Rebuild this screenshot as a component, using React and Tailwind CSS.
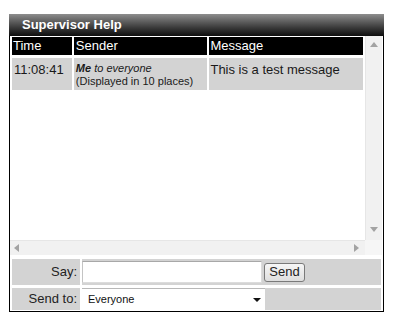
const FONT = { fontFamily: '"Liberation Sans", Arial, sans-serif' };

// ─── fake scrollbar arrows ────────────────────────────────────────────
function Arrow({ dir }) {
  const pts = {
    up: "0,5 4,0 8,5",
    down: "0,0 8,0 4,5",
    left: "5,0 5,8 0,4",
    right: "0,0 0,8 5,4",
  }[dir];
  const vert = dir === "up" || dir === "down";
  return (
    <svg width={vert ? 8 : 5} height={vert ? 5 : 8} viewBox={vert ? "0 0 8 5" : "0 0 5 8"}>
      <polygon points={pts} fill="#a3a3a3" />
    </svg>
  );
}

export default function App() {
  return (
    <div className="bg-white w-[396px] h-[325px] pt-[14px] pl-[9px]" style={FONT}>
      <div className="w-[375px] border-x border-b border-black">
        {/* title bar */}
        <div className="h-[22px] -mx-px bg-linear-to-b from-[#8e8e8e] via-[#4a4a4a] to-[#0e0e0e] pl-[13px] text-[13px] leading-[22px] font-bold text-white">
          Supervisor Help
        </div>

        {/* message list */}
        <div className="flex h-[204px]">
          <div className="w-[355px] px-[2px] pt-[1px] flex flex-col gap-[3px]">
            <div className="flex gap-[2px] h-[18px] text-[13px] leading-[18px] text-white">
              <div className="w-[60px] bg-black pl-[1px]">Time</div>
              <div className="w-[134px] bg-black pl-[2px]">Sender</div>
              <div className="w-[154px] bg-black pl-[1px]">Message</div>
            </div>
            <div className="flex gap-[2px] h-[32px] text-[#1a1a1a]">
              <div className="w-[60px] bg-[#d3d3d3] pl-[2px] pt-[4px] text-[13px] leading-[15px]">11:08:41</div>
              <div className="w-[134px] bg-[#d3d3d3] pl-[2px] pt-[4px] text-[11px] leading-[13px]">
                <div className="italic">
                  <span className="font-bold">Me</span> to everyone
                </div>
                <div>(Displayed in 10 places)</div>
              </div>
              <div className="w-[154px] bg-[#d3d3d3] pl-[1px] pt-[4px] text-[13px] leading-[15px]">
                This is a test message
              </div>
            </div>
          </div>
          <div className="w-[17px] bg-[#f1f1f1] border-l border-[#e6e6e6] flex flex-col items-center justify-between pt-[6px] pb-[8px]">
            <Arrow dir="up" />
            <Arrow dir="down" />
          </div>
        </div>
        <div className="flex h-[15px]">
          <div className="w-[355px] bg-[#f1f1f1] border-t border-[#e6e6e6] flex items-center justify-between pl-[4px] pr-[6px]">
            <Arrow dir="left" />
            <Arrow dir="right" />
          </div>
          <div className="w-[17px] bg-[#f6f6f6]" />
        </div>

        {/* form */}
        <div className="px-[2px] pt-[4px] flex flex-col gap-[3px] text-[13px] text-[#222]">
          <div className="flex gap-[2px] h-[26px]">
            <div className="w-[68px] bg-[#d3d3d3] text-right pr-[3px] leading-[26px]">Say:</div>
            <div className="flex-1 bg-[#d3d3d3] flex items-center gap-[2px]">
              <div className="w-[180px] h-[22px] bg-white border border-[#dcdcdc] border-t-[#a8a8a8] border-l-[#c4c4c4]" />
              <button className="w-[41px] h-[19px] rounded-[3px] border border-[#7a7a7a] bg-linear-to-b from-[#f6f6f6] to-[#dedede] text-[13px] leading-[16px] text-[#222]">
                Send
              </button>
            </div>
          </div>
          <div className="flex gap-[2px] h-[22px]">
            <div className="w-[68px] bg-[#d3d3d3] text-right pr-[3px] leading-[22px]">Send to:</div>
            <div className="flex-1 bg-[#d3d3d3] flex">
              <div className="w-[183px] h-[22px] bg-white border-t border-[#b8b8b8] flex items-center justify-between pl-[6px] pr-[4px] text-[11px] text-[#111]">
                <span>Everyone</span>
                <svg width="8" height="4" viewBox="0 0 8 4">
                  <polygon points="0,0 8,0 4,4" fill="#111" />
                </svg>
              </div>
            </div>
          </div>
        </div>
        <div className="h-[1px]" />
      </div>
    </div>
  );
}
